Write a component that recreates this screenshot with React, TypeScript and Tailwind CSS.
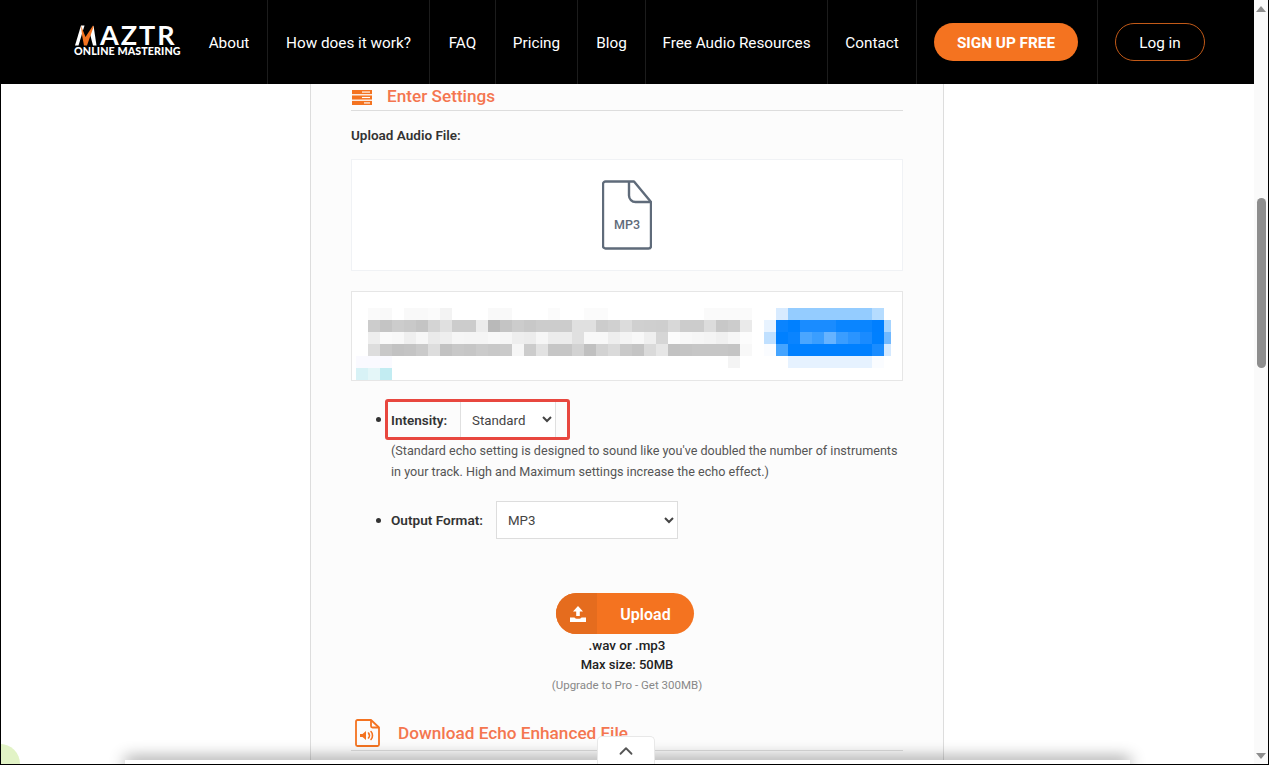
import { ChevronUp } from "lucide-react";

const navItems = [
  { label: "About", width: "w-[77px]" },
  { label: "How does it work?", width: "w-[162px]" },
  { label: "FAQ", width: "w-[66px]" },
  { label: "Pricing", width: "w-[82px]" },
  { label: "Blog", width: "w-[68px]" },
  { label: "Free Audio Resources", width: "w-[182px]" },
  { label: "Contact", width: "w-[89px]" },
];

// the blurred-out block in the screenshot, one string per row of 45 cells
const mosaic = [
  ". fa f9 . f9 f9 fb f3 . . . f9 f9 . . . fb . . fb fb . . . . . . . . fa fa fa fa . . d8ebff 94ccff 94ccff 94ccff 94ccff 94ccff 94ccff 94ccff b5dcff .",
  ". cc c4 cc c9 c4 d4 e0 cc cc ec b9 c4 cc c8 cc cc cc e0 e0 cc d0 dc d0 cf ce d8 cc cc dc c8 cc ea . e8f3ff 0a84ff 0080ff 1a8cff 1a8cff 1a8cff 0a85ff 0a85ff 0a85ff 007fff a6d4ff",
  ". ee fa f8 ef f7 ea ee f6 f5 f5 f8 f6 ee ec f6 ec ec e0 f8 f8 ee f4 f8 ef d6 fc f8 f6 f4 f0 f6 fc . c0e0ff 0080ff 0a84ff 4aa6ff 3a9eff 66b3ff 3a9dff 2a94ff 1a8bff 0080ff 70b8ff",
  ". dd c8 c2 c4 ca dd c2 c8 c6 cb c8 ca f6 cc e2 c6 c6 d2 c0 d2 da c9 c4 da e6 c2 c4 c6 c6 c6 c4 f8 . fafcff 44a4ff 0080ff 0080ff 0080ff 0080ff 0080ff 0080ff 0080ff 1a8cff d4e9ff",
  "fafaff fafaff fafaff . . . . . . . . . . . . . . . . . . . . . . . . . . . . f4 . . . . e6f2ff e6f2ff e6f2ff e6f2ff e6f2ff e6f2ff e6f2ff fafcff .",
  "d8f2f6 e4f6f8 c2ecf2 . . . . . . . . . . . . . . . . . . . . . . . . . . . . . . . . . . . . . . . . . .",
].map((row) => row.split(" "));

function cellColor(value: string) {
  if (value === ".") return "transparent";
  return value.length === 2 ? `#${value}${value}${value}` : `#${value}`;
}

function SettingsIcon() {
  return (
    <svg width="20" height="15" viewBox="0 0 20 16" preserveAspectRatio="none" className="shrink-0">
      <rect x="0" y="0" width="20" height="4.4" fill="#f47320" />
      <rect x="0" y="5.8" width="20" height="4.4" fill="#f47320" />
      <rect x="0" y="11.6" width="20" height="4.4" fill="#f47320" />
      <rect x="10" y="1.6" width="8" height="1.2" fill="#fff" />
      <rect x="10" y="7.4" width="8" height="1.2" fill="#fff" />
      <rect x="12" y="13.2" width="6" height="1.2" fill="#fff" />
    </svg>
  );
}

function SpeakerFileIcon() {
  return (
    <svg width="25" height="28" viewBox="0 0 25 28" fill="none" className="shrink-0">
      <path d="M16 1H2.5A1.5 1.5 0 0 0 1 2.5v23A1.5 1.5 0 0 0 2.5 27h20a1.5 1.5 0 0 0 1.5-1.5V8.5z" stroke="#f47320" strokeWidth="1.8" strokeLinejoin="round" />
      <path d="M16 1v6a1.5 1.5 0 0 0 1.5 1.5H24" stroke="#f47320" strokeWidth="1.8" strokeLinejoin="round" />
      <path d="M5 15h2.5l3.5-3v9l-3.5-3H5z" fill="#f47320" />
      <path d="M13.5 14c1 1.3 1 3.7 0 5M16 12.5c2 2.2 2 5.8 0 8" stroke="#f47320" strokeWidth="1.6" strokeLinecap="round" />
    </svg>
  );
}

function Mp3FileIcon() {
  return (
    <svg width="50" height="70" viewBox="0 0 50 70" fill="none">
      <path d="M32 1.500H3.500a2.500 2.500 0 0 0-2.500 2.500v62a2.500 2.500 0 0 0 2.500 2.500h43a2.500 2.500 0 0 0 2.500-2.500V22z" stroke="#5f6b7a" strokeWidth="2.400" strokeLinejoin="round" />
      <path d="M27 1.500v14a6.500 6.500 0 0 0 6.500 6.500H49" stroke="#5f6b7a" strokeWidth="2.400" strokeLinejoin="round" />
      <text x="25" y="49" textAnchor="middle" fontSize="12.500" fontWeight="500" fill="#5f6b7a" fontFamily="Roboto, sans-serif">MP3</text>
    </svg>
  );
}

function UploadIcon() {
  return (
    <svg width="16" height="16" viewBox="0 0 16 16" fill="#fff">
      <path d="M8 0l5 5.500H9.800V10H6.200V5.500H3z" />
      <path d="M0 11.500h4.500c.5 1 1.500 1.300 3.500 1.300s3-.3 3.500-1.300H16V16H0z" />
    </svg>
  );
}

export default function App() {
  return (
    <div className="relative flex h-[765px] w-[1269px] overflow-hidden border-x border-b border-black bg-white font-[Roboto,sans-serif]">
      <div className="flex min-w-0 flex-1 flex-col">
        <header className="flex h-[84px] shrink-0 items-center bg-black pl-[73px] text-white">
          <div className="relative -mt-[3px] w-[117px] shrink-0">
            <div className="relative h-[21px] w-[109px] font-[Lato,sans-serif] text-[27px] leading-[17px] font-bold tracking-[2px] whitespace-nowrap">
              <span className="tracking-[-3.500px]">M</span>
              <span className="ml-[4px]">AZTR</span>
              {/* orange notch of the M in the logo */}
              <svg width="24" height="21" viewBox="0 0 24 21" className="absolute top-[-1px] left-0">
                <rect x="0" y="0" width="24" height="21" fill="#000" />
                <polygon points="1,20.500 7,0.500 10.500,0.500 4.500,20.500" fill="#fff" />
                <polygon points="16,9 19.500,0.500 22.500,20.500 19,20.500" fill="#fff" />
                <polygon points="7,0.500 11.500,12 19,0.500 19.500,2 13,20.500 10,20.500 8,10" fill="#f47320" />
              </svg>
            </div>
            <div className="h-[8px] w-[109px] font-[Lato,sans-serif] text-[10.700px] leading-[8px] font-black tracking-[0.1px] whitespace-nowrap">ONLINE MASTERING</div>
          </div>
          <nav className="flex h-full">
            {navItems.map((item) => (
              <a key={item.label} className={`flex items-center justify-center border-r border-[#1c1c1c] pt-[2px] text-[15.300px] whitespace-nowrap ${item.width}`}>
                {item.label}
              </a>
            ))}
            <div className="flex w-[181px] items-center justify-center border-r border-[#1c1c1c] pr-[2px]">
              <button className="h-[38px] w-[144px] rounded-[19px] bg-[#f47320] pt-[2px] text-[15.300px] font-bold whitespace-nowrap">SIGN UP FREE</button>
            </div>
            <div className="flex items-center pl-[17px]">
              <button className="h-[38px] w-[90px] rounded-[19px] border border-[#c25a18] pt-[2px] text-[15.300px]">Log in</button>
            </div>
          </nav>
        </header>

        <main className="ml-[309px] flex h-[680px] w-[634px] flex-col border-x border-[#dddddd] bg-[#fcfcfc] px-[40px]">
          <div className="flex h-[27px] shrink-0 items-center gap-[15px] border-b border-[#dddddd] pl-[1px]">
            <SettingsIcon />
            <h2 className="text-[17.200px] font-medium text-[#f47650]">Enter Settings</h2>
          </div>
          <p className="mt-[14px] h-[20px] text-[13.500px] leading-[20px] font-semibold text-[#333333]">Upload Audio File:</p>
          <div className="mt-[14px] flex h-[112px] shrink-0 items-center justify-center border border-[#f0f2f5] bg-white">
            <Mp3FileIcon />
          </div>
          <div className="mt-[20px] h-[90px] shrink-0 border border-[#e6e6e6] bg-white pt-[16px] pl-[4px]">
            <div className="grid w-[535px] grid-cols-[repeat(45,12px)] overflow-hidden">
              {mosaic.flat().map((value, i) => (
                <div key={i} className="h-[12px]" style={{ backgroundColor: cellColor(value) }} />
              ))}
            </div>
          </div>

          <div className="mt-[18px] flex items-center pl-[25px]">
            <span className="mr-[4px] h-[5px] w-[5px] rounded-full bg-[#333333]" />
            <div className="flex h-[41px] w-[185px] items-center rounded-[3px] border-[3px] border-[#e8473f] pl-[3px]">
              <label className="w-[69px] pt-px text-[13.500px] font-semibold text-[#333333]">Intensity:</label>
              <select defaultValue="Standard" className="h-[35px] w-[96px] border-x border-[#e0e0e0] bg-white pt-px pl-[7px] text-[13.300px] text-[#444444]">
                <option>Standard</option>
                <option>High</option>
                <option>Maximum</option>
              </select>
            </div>
          </div>
          <p className="ml-[40px] w-[512px] text-[12.600px] leading-[21px] text-[#555555]">
            (Standard echo setting is designed to sound like you've doubled the number of instruments in your track. High and Maximum settings increase the echo effect.)
          </p>
          <div className="mt-[19px] flex items-center pl-[25px]">
            <span className="mr-[10px] h-[5px] w-[5px] rounded-full bg-[#333333]" />
            <label className="w-[105px] text-[13.600px] font-semibold text-[#333333]">Output Format:</label>
            <select defaultValue="MP3" className="h-[38px] w-[182px] border border-[#dddddd] bg-white pl-[7px] text-[13.300px] text-[#444444]">
              <option>MP3</option>
              <option>WAV</option>
            </select>
          </div>

          <div className="mt-[54px] flex flex-col items-center text-center">
            <button className="-ml-[4px] flex h-[41px] w-[138px] overflow-hidden rounded-[21px] bg-[#f47320] text-white">
              <span className="flex h-full w-[41px] items-center justify-center bg-[#e56c1e] pl-[2px]">
                <UploadIcon />
              </span>
              <span className="flex h-full flex-1 items-center justify-center pt-[2px] text-[16px] font-semibold">Upload</span>
            </button>
            <p className="mt-[2px] text-[13.400px] leading-[19px] font-medium text-[#222222]">.wav or .mp3</p>
            <p className="text-[13px] leading-[20px] font-medium text-[#222222]">Max size: 50MB</p>
            <p className="text-[11.500px] leading-[20px] text-[#888888]">(Upgrade to Pro - Get 300MB)</p>
          </div>

          <div className="mt-[24px] flex h-[32px] shrink-0 items-start gap-[18px] border-b border-[#dddddd] pl-[4px]">
            <SpeakerFileIcon />
            <h2 className="text-[17.200px] leading-[28px] font-medium text-[#f47650]">Download Echo Enhanced File</h2>
          </div>
        </main>
      </div>

      {/* scrollbar */}
      <div className="relative w-[14px] shrink-0 bg-[#fafafa]">
        <svg width="10" height="6" viewBox="0 0 10 6" className="absolute top-[6px] left-[2px]">
          <polygon points="5,0 10,6 0,6" fill="#8e8e8e" />
        </svg>
        <div className="absolute top-[198px] left-[3px] h-[170px] w-[9px] rounded-full bg-[#8e8e8e]" />
        <svg width="10" height="6" viewBox="0 0 10 6" className="absolute bottom-[5px] left-[2px]">
          <polygon points="0,0 10,0 5,6" fill="#8e8e8e" />
        </svg>
      </div>

      {/* sticky bottom bar peeking in */}
      <div className="absolute top-[760px] left-[124px] h-[10px] w-[1005px] bg-white shadow-[0_-2px_16px_rgba(0,0,0,0.45)]" />
      <div className="absolute top-[736px] left-[596px] flex h-[30px] w-[58px] justify-center rounded-t-[5px] border border-b-0 border-[#e8e8e8] bg-white pt-[3px] text-[#555555]">
        <ChevronUp size={22} strokeWidth={2} />
      </div>
      <div className="absolute top-[744px] left-[-21px] h-[40px] w-[40px] rounded-full bg-[#e2f3c6]" />
    </div>
  );
}
